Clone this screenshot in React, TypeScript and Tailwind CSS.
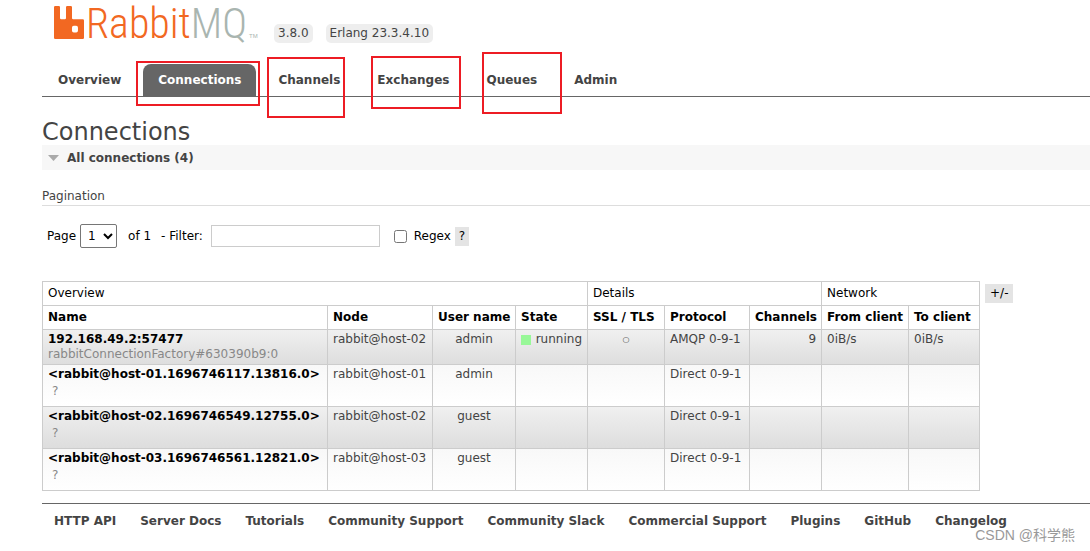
import { ReactNode } from 'react';

const tabs = [
  { label: 'Overview', mark: '' },
  { label: 'Connections', mark: '-top-[3px] -left-[7px] h-[45px] w-[124px]' },
  { label: 'Channels', mark: '-top-[7px] left-1 h-[61px] w-[78px]' },
  { label: 'Exchanges', mark: '-top-2 left-[9px] h-[53px] w-[90px]' },
  { label: 'Queues', mark: '-top-3 left-[11px] h-[62px] w-[80px]' },
  { label: 'Admin', mark: '' },
];

const columns = [
  { label: 'Name', width: 'w-[285px]' },
  { label: 'Node', width: 'w-[105px]' },
  { label: 'User name', width: 'w-[83px]' },
  { label: 'State', width: 'w-[72px]' },
  { label: 'SSL / TLS', width: 'w-[77px]' },
  { label: 'Protocol', width: 'w-[85px]' },
  { label: 'Channels', width: 'w-[72px]' },
  { label: 'From client', width: 'w-[87px]' },
  { label: 'To client', width: 'w-[71px]' },
];

const connections = [
  {
    name: '192.168.49.2:57477',
    detail: 'rabbitConnectionFactory#630390b9:0',
    node: 'rabbit@host-02',
    user: 'admin',
    state: 'running',
    ssl: '○',
    protocol: 'AMQP 0-9-1',
    channels: '9',
    fromClient: '0iB/s',
    toClient: '0iB/s',
  },
  {
    name: '<rabbit@host-01.1696746117.13816.0>',
    node: 'rabbit@host-01',
    user: 'admin',
    protocol: 'Direct 0-9-1',
  },
  {
    name: '<rabbit@host-02.1696746549.12755.0>',
    node: 'rabbit@host-02',
    user: 'guest',
    protocol: 'Direct 0-9-1',
  },
  {
    name: '<rabbit@host-03.1696746561.12821.0>',
    node: 'rabbit@host-03',
    user: 'guest',
    protocol: 'Direct 0-9-1',
  },
];

const footerLinks = [
  'HTTP API',
  'Server Docs',
  'Tutorials',
  'Community Support',
  'Community Slack',
  'Commercial Support',
  'Plugins',
  'GitHub',
  'Changelog',
];

function Logo() {
  return (
    <a href="#" aria-label="RabbitMQ" className="block">
      <svg width="216" height="44" viewBox="0 0 216 44" className="overflow-visible">
        <svg x="12" y="6" width="30" height="33" viewBox="0 0 24 24" preserveAspectRatio="none">
          <path
            fill="#f26822"
            d="M23.035 9.601h-7.677a.956.956 0 01-.962-.962V.962a.956.956 0 00-.962-.956H10.56a.956.956 0 00-.962.956V8.64a.956.956 0 01-.962.962H5.762a.956.956 0 01-.961-.962V.962A.956.956 0 003.839 0H.959a.956.956 0 00-.956.962v22.076A.956.956 0 00.965 24h22.07a.956.956 0 00.962-.962V10.58a.956.956 0 00-.962-.98zm-3.86 8.152a1.437 1.437 0 01-1.437 1.443h-1.924a1.437 1.437 0 01-1.436-1.443v-1.917a1.437 1.437 0 011.436-1.443h1.924a1.437 1.437 0 011.437 1.443z"
          />
        </svg>
        <text
          x="44"
          y="38"
          fontSize="42"
          className="font-['Liberation_Sans_Narrow','Roboto_Condensed',sans-serif] font-light"
        >
          <tspan fill="#f26822">Rabbit</tspan>
          <tspan fill="#a9b5b0">MQ</tspan>
        </text>
        <text x="207" y="38" fontSize="6" fill="#a9b5b0" className="font-['Liberation_Sans',sans-serif]">
          TM
        </text>
      </svg>
    </a>
  );
}

function Badge({ children }: { children: ReactNode }) {
  return <span className="rounded-[5px] bg-[#eee] px-1 py-0.5 leading-[15px]">{children}</span>;
}

function Header() {
  return (
    <header>
      <div className="flex items-end gap-3">
        <Logo />
        <div className="flex gap-[13px] pb-px pl-1">
          <Badge>3.8.0</Badge>
          <Badge>Erlang 23.3.4.10</Badge>
        </div>
      </div>
      <nav className="mt-5 border-b border-[#666]">
        <ul className="flex gap-[7px] pl-px">
          {tabs.map((tab) => (
            <li key={tab.label} className="relative">
              <a
                href="#"
                className={`block rounded-t-lg px-[15px] font-bold leading-8 ${
                  tab.label === 'Connections' ? 'bg-[#666] text-white' : 'text-[#444]'
                }`}
              >
                {tab.label}
              </a>
              {tab.mark && (
                <span className={`pointer-events-none absolute border-2 border-[#ed1c24] ${tab.mark}`} />
              )}
            </li>
          ))}
        </ul>
      </nav>
    </header>
  );
}

function Filters() {
  return (
    <form className="mt-[18px] flex h-6 items-center pl-[5px] text-black">
      <label htmlFor="page">Page</label>
      <select
        id="page"
        className="ml-1 h-6 w-[37px] rounded-[2px] border border-[#767676] bg-white pl-[3px] text-xs"
      >
        <option>1</option>
      </select>
      <span className="ml-[11px]">of 1</span>
      <label htmlFor="filter" className="ml-[10px]">
        - Filter:
      </label>
      <input id="filter" type="text" className="ml-2 h-[22px] w-[169px] border border-[#ccc] px-1" />
      <input id="regex" type="checkbox" className="ml-[14px] h-[13px] w-[13px]" />
      <label htmlFor="regex" className="ml-[7px]">
        Regex
      </label>
      <button type="button" className="ml-1 bg-[#e4e4e4] px-1 py-0.5 leading-[15px]">
        ?
      </button>
    </form>
  );
}

function ConnectionsTable() {
  return (
    <table className="w-[937px] table-fixed border-collapse whitespace-nowrap text-left leading-[15px] [&_td]:border [&_td]:border-[#ccc] [&_td]:px-[5px] [&_td]:py-[2px] [&_td]:align-top [&_th]:h-6 [&_th]:border [&_th]:border-[#ccc] [&_th]:px-[5px]">
      <colgroup>
        {columns.map((col) => (
          <col key={col.label} className={col.width} />
        ))}
      </colgroup>
      <thead className="text-black">
        <tr>
          <th colSpan={4} className="font-normal">Overview</th>
          <th colSpan={3} className="font-normal">Details</th>
          <th colSpan={2} className="font-normal">Network</th>
        </tr>
        <tr>
          {columns.map((col) => (
            <th key={col.label} className="font-bold">
              {col.label}
            </th>
          ))}
        </tr>
      </thead>
      <tbody>
        {connections.map((row) => (
          <tr
            key={row.name}
            className="odd:bg-linear-to-b odd:from-[#f0f0f0] odd:to-[#dddddd] even:bg-linear-to-b even:from-[#f8f8f8] even:to-white"
          >
            <td>
              <a href="#" className="block font-bold text-black">
                {row.name}
              </a>
              {row.detail ? (
                <span className="block text-[#888]">{row.detail}</span>
              ) : (
                <span className="block px-1 pb-1 leading-[18px] text-[#888]">?</span>
              )}
            </td>
            <td>{row.node}</td>
            <td className="text-center">{row.user}</td>
            <td>
              {row.state && (
                <span className="flex items-center gap-[5px]">
                  <span className="h-[10px] w-[10px] bg-[#98f898]" />
                  {row.state}
                </span>
              )}
            </td>
            <td className="text-center text-[8px]">{row.ssl}</td>
            <td>{row.protocol}</td>
            <td className="text-right">{row.channels}</td>
            <td>{row.fromClient}</td>
            <td>{row.toClient}</td>
          </tr>
        ))}
      </tbody>
    </table>
  );
}

export default function App() {
  return (
    <div className="relative overflow-hidden bg-white pb-[22px] pl-[42px] font-['DejaVu_Sans',Verdana,sans-serif] text-xs text-[#444]">
      <Header />
      <main>
        <h1 className="mt-[22px] text-2xl leading-[26px]">Connections</h1>
        <h2 className="flex h-[25px] items-center gap-2 bg-[#f7f7f7] pl-[6px] font-bold">
          <svg width="11" height="6" viewBox="0 0 11 6">
            <path d="M0 0h11L5.5 6z" fill="#aaa" />
          </svg>
          All connections (4)
        </h2>
        <h3 className="mt-[18px] border-b border-[#ddd] pb-px">Pagination</h3>
        <Filters />
        <div className="mt-[33px] flex items-start gap-[5px]">
          <ConnectionsTable />
          <button type="button" className="mt-[3px] bg-[#e4e4e4] px-[5px] py-0.5 leading-[15px] text-black">
            +/-
          </button>
        </div>
      </main>
      <footer className="mt-3 border-t border-[#666]">
        <ul className="flex gap-6 whitespace-nowrap pt-[9px] pl-3">
          {footerLinks.map((link) => (
            <li key={link}>
              <a href="#" className="font-bold">
                {link}
              </a>
            </li>
          ))}
        </ul>
      </footer>
      <span className="absolute right-[15px] bottom-[6px] font-['Liberation_Sans','Noto_Sans_CJK_SC',sans-serif] text-sm leading-5 text-[#999]">
        CSDN @科学熊
      </span>
    </div>
  );
}
